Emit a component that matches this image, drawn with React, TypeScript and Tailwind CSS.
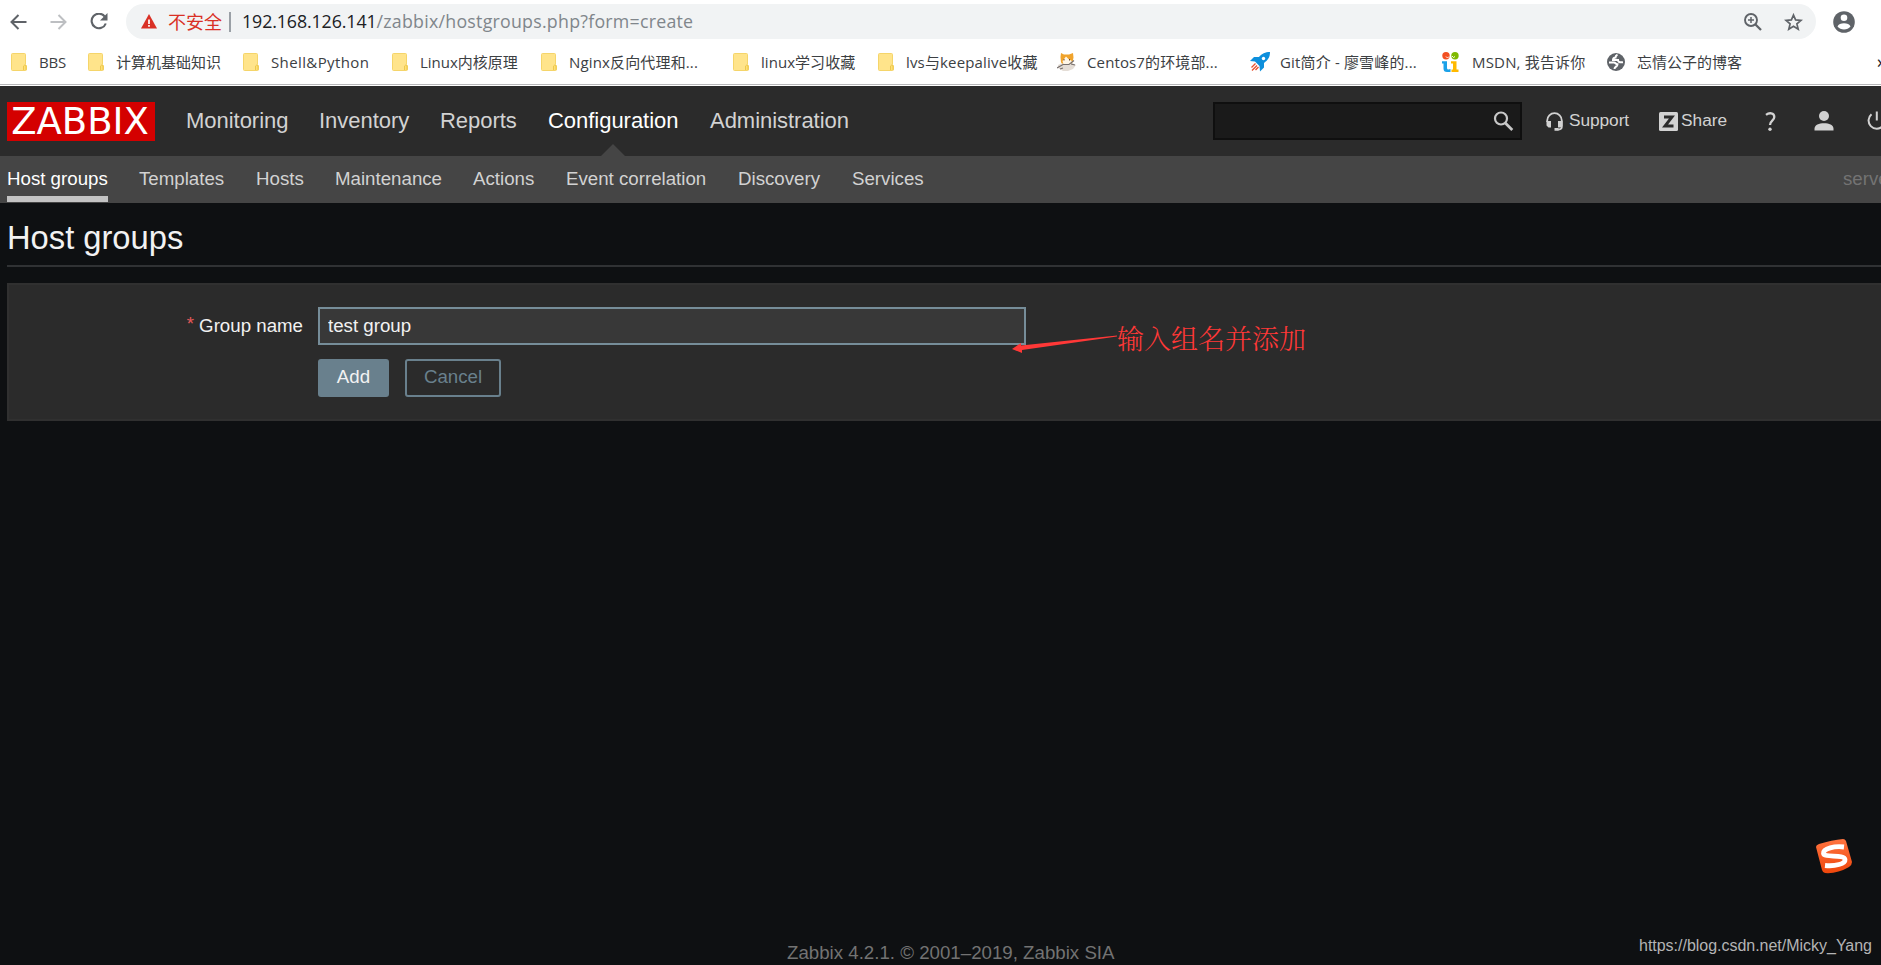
import type { ReactNode } from 'react'

interface Bookmark {
  label: string
  width: string
  spacing?: string
  icon?: ReactNode
}

interface MenuItem {
  label: string
  width: string
  active?: boolean
}

function FolderIcon() {
  return (
    <svg width="16" height="18" viewBox="0 0 16 18">
      <path d="M1.5.5h12q1 0 1 1v10l1 1v4q0 1-1 1h-13q-1 0-1-1v-15q0-1 1-1z" fill="#ffe48b" stroke="#f5d56a" />
      <path d="M12.5 17v-4q1.300-2 2.500 0v4" fill="#ffdf75" stroke="#edc84d" />
    </svg>
  )
}

function CatIcon() {
  return (
    <svg width="20" height="18" viewBox="0 0 20 18">
      <path d="M1 12l4-2 10 0 4 2-3 4-5 2H6l-5-3z" fill="#e4ddd6" />
      <path d="M4 0l3 1.500h5L16 0l.500 4.500-1 5-3 2H7l-3-2L3.500 4z" fill="#f0a32c" />
      <path d="M9 3.500L5.500 8l1 3.500 6.500.500 2-4-3.500-2z" fill="#fff6e6" />
      <path d="M0 15l6-3.500h6l5-4M14 11l4 1M3 16l3-1" fill="none" stroke="#77706e" strokeWidth="1.200" />
      <path d="M7 6v1.500M12.500 6v1.500" stroke="#6b4a2c" />
    </svg>
  )
}

function RocketIcon() {
  return (
    <svg width="20" height="20" viewBox="0 0 20 20">
      <path d="M20 0c-5 0-8 1.500-11 5L4 5 0 9l5 .500 4.500 4.500L10 19.500l4-4V11c4-3 6-6 6-11z" fill="#0d8fdc" />
      <circle cx="13.500" cy="6.500" r="1.700" fill="#fff" />
      <path d="M5.500 11.500L1.500 15.500M7 13.500L2 18.500M8.500 15L5.500 18" stroke="#e8502f" strokeWidth="1.300" />
    </svg>
  )
}

function MsdnIcon() {
  return (
    <svg width="17" height="20" viewBox="0 0 17 20">
      <circle cx="4" cy="3.700" r="3.700" fill="#f25022" />
      <circle cx="13" cy="3.700" r="3.700" fill="#7fba00" />
      <path d="M0 9.300h5V16q0 1.500 1.500 1.500l2-.500V20H5q-3.500 0-3.500-3.500V11.500H0z" fill="#1ba1e8" />
      <path d="M9 9.300h5.500V17.500H16.500V20H9.500V17.500H11V11.500H9z" fill="#ffb900" />
      <path d="M4 4.500l1.500 1.500 1.500-1.500M10 4l1.500 1.500L13 4.500" fill="none" stroke="#fff" strokeWidth=".9" />
    </svg>
  )
}

function GlobeIcon() {
  return (
    <svg width="18" height="18" viewBox="0 0 18 18">
      <circle cx="9" cy="9" r="9" fill="#5f6368" />
      <path
        d="M10.500 1.800c-2 .700-2 1.500-2 2.700-2 0-2.500.800-2.500 2.500h5c0 2 1.500 2.700 5 2.200M2 9.500h5c1.500 0 1.500 1.700 3.500 1.700 0 2.500-3 2.300-3 4.800"
        fill="none"
        stroke="#fff"
        strokeWidth="2"
      />
    </svg>
  )
}

const bookmarks: Bookmark[] = [
  { label: 'BBS', width: 'w-[77px]', spacing: '-tracking-[0.2px]' },
  { label: '计算机基础知识', width: 'w-[155px]' },
  { label: 'Shell&Python', width: 'w-[149px]', spacing: 'tracking-[0.38px]' },
  { label: 'Linux内核原理', width: 'w-[149px]' },
  { label: 'Nginx反向代理和...', width: 'w-[192px]', spacing: 'tracking-[0.15px]' },
  { label: 'linux学习收藏', width: 'w-[145px]', spacing: 'tracking-[0.05px]' },
  { label: 'lvs与keepalive收藏', width: 'w-[179px]', spacing: 'tracking-[0.16px]' },
  { label: 'Centos7的环境部...', width: 'w-[193px]', spacing: 'tracking-[0.13px]', icon: <CatIcon /> },
  { label: 'Git简介 - 廖雪峰的...', width: 'w-[192px]', spacing: 'tracking-[0.16px]', icon: <RocketIcon /> },
  { label: 'MSDN, 我告诉你', width: 'w-[165px]', spacing: 'tracking-[0.18px]', icon: <MsdnIcon /> },
  { label: '忘情公子的博客', width: 'w-[270px]', icon: <GlobeIcon /> },
]

const mainMenu: MenuItem[] = [
  { label: 'Monitoring', width: 'w-[133px]' },
  { label: 'Inventory', width: 'w-[121px]' },
  { label: 'Reports', width: 'w-[108px]' },
  { label: 'Configuration', width: 'w-[162px]', active: true },
  { label: 'Administration', width: 'w-[140px]' },
]

const subMenu: MenuItem[] = [
  { label: 'Host groups', width: 'w-[132px]', active: true },
  { label: 'Templates', width: 'w-[117px]' },
  { label: 'Hosts', width: 'w-[79px]' },
  { label: 'Maintenance', width: 'w-[138px]' },
  { label: 'Actions', width: 'w-[93px]' },
  { label: 'Event correlation', width: 'w-[172px]' },
  { label: 'Discovery', width: 'w-[114px]' },
  { label: 'Services', width: 'w-[90px]' },
]

function AddressBar() {
  return (
    <div className="flex h-[43px] items-center">
      <div className="flex w-[126px] items-center pl-[10px]">
        <svg width="17" height="16" viewBox="0 0 17 16" fill="none" stroke="#5f6368" strokeWidth="2">
          <path d="M16.500 8H1.500M8.500 1l-7 7 7 7" />
        </svg>
        <svg className="ml-[23px]" width="17" height="16" viewBox="0 0 17 16" fill="none" stroke="#bdbfc2" strokeWidth="2">
          <path d="M0.500 8h15M8.500 1l7 7-7 7" />
        </svg>
        <svg className="ml-[23px]" width="18" height="17" viewBox="0 0 18 17">
          <path d="M14.800 3.600A7.300 7.300 0 1 0 15.800 10.500" fill="none" stroke="#5f6368" strokeWidth="2.100" />
          <path d="M17.500 0v7.500h-7.500z" fill="#5f6368" />
        </svg>
      </div>
      <div className="flex h-[35px] w-[1690px] items-center rounded-full bg-[#f1f3f4] pl-[15px]">
        <svg width="16" height="15" viewBox="0 0 16 15">
          <path d="M8 0l8 14.500H0z" fill="#d93025" />
          <path d="M8 5.500v4.500M8 11v1.800" stroke="#fff" strokeWidth="1.700" />
        </svg>
        <span className="ml-[11px] w-[54px] text-[18px] leading-none whitespace-nowrap text-[#d93025]">不安全</span>
        <span className="ml-[7px] h-5 w-0.5 bg-[#9aa0a6]" />
        <span className="ml-[11px] text-[17.800px] tracking-[-0.100px] whitespace-nowrap text-[#80868b]">
          <span className="text-[#202124]">192.168.126.141</span>
          <span className="tracking-[0.240px]">/zabbix/hostgroups.php?form=create</span>
        </span>
        <svg className="ml-auto" width="18" height="18" viewBox="0 0 18 18" fill="none" stroke="#5f6368">
          <circle cx="7" cy="7" r="6" strokeWidth="1.900" />
          <path d="M11 11l6 6" strokeWidth="2.300" />
          <path d="M4 7h6M7 4v6" strokeWidth="1.500" />
        </svg>
        <svg className="mr-[13px] ml-[22px]" width="19" height="18" viewBox="0 0 19 18">
          <path
            d="M9.500 2l2.100 4.900 5.400.500-4.100 3.500 1.300 5.300-4.700-2.900-4.700 2.900 1.300-5.300L2 7.400l5.400-.500z"
            fill="none"
            stroke="#5f6368"
            strokeWidth="1.700"
          />
        </svg>
      </div>
      <svg className="ml-[17px]" width="22" height="22" viewBox="0 0 22 22">
        <circle cx="11" cy="11" r="10.800" fill="#5f6368" />
        <circle cx="11" cy="6.700" r="3.300" fill="#fff" />
        <path d="M4.500 15.500C6 11.300 16 11.300 17.500 15.500 14.500 19.400 7.500 19.400 4.500 15.500z" fill="#fff" />
      </svg>
    </div>
  )
}

function BookmarksBar() {
  return (
    <div className="flex h-[41px] overflow-hidden pl-[11px] text-[15px] whitespace-nowrap text-[#3c4043]">
      {bookmarks.map((item) => (
        <div key={item.label} className={`flex h-[38px] shrink-0 items-center ${item.width}`}>
          <span className={`shrink-0 ${item.icon ? 'w-[30px]' : 'w-7'}`}>{item.icon ?? <FolderIcon />}</span>
          <span className={item.spacing}>{item.label}</span>
        </div>
      ))}
      <span className="pt-[5px] text-[18px] text-[#202124]">»</span>
    </div>
  )
}

function TopNav() {
  return (
    <header className="flex h-[70px] w-full bg-[#2b2b2b] pl-[7px]">
      <div className="mt-4 flex h-[39px] w-[148px] shrink-0 items-center justify-center bg-[#d40000] pr-0.5 text-[37px] leading-none text-white [font-family:'DejaVu_Sans',sans-serif]">
        ZABBIX
      </div>
      <nav className="ml-[31px] flex text-[22px] leading-[69px] tracking-[-0.030px] whitespace-nowrap text-[#d2d2d2]">
        {mainMenu.map((item) => (
          <a key={item.label} className={`shrink-0 ${item.width} ${item.active ? 'text-white' : ''}`}>
            <span className="relative inline-block h-[70px]">
              {item.label}
              {item.active && (
                <span className="absolute bottom-0 left-1/2 -ml-3 border-x-12 border-b-12 border-x-transparent border-b-[#454545]" />
              )}
            </span>
          </a>
        ))}
      </nav>
      <div className="mt-4 ml-auto flex h-[38px] shrink-0 items-center text-[17.300px] text-[#d2d2d2]">
        <div className="flex h-[38px] w-[309px] items-center justify-end border-2 border-[#0f0f0f] bg-[#1a1a1a] pr-1.5">
          <svg width="21" height="20" viewBox="0 0 21 20" fill="none" stroke="#c8c8c8">
            <circle cx="8" cy="7.500" r="6" strokeWidth="2.200" />
            <path d="M12.300 12l7 7" strokeWidth="2.700" />
          </svg>
        </div>
        <a className="ml-6 flex w-[113px] items-center">
          <svg width="17" height="19" viewBox="0 0 17 19">
            <path d="M1.200 10V8.500a7.300 7.300 0 0 1 14.600 0V15q0 2.500-4 2.500" fill="none" stroke="#d2d2d2" strokeWidth="1.800" />
            <path d="M.500 9H5v6.500H2.500L.500 13.500zM12 9h4.500v5l-2 1.500H12zM8.500 16h4v2.800h-4z" fill="#d2d2d2" />
          </svg>
          <span className="ml-1.5 tracking-[-0.060px]">Support</span>
        </a>
        <a className="flex w-[106px] items-center">
          <svg width="19" height="19" viewBox="0 0 19 19">
            <rect width="19" height="19" rx="1.500" fill="#d2d2d2" />
            <path d="M5 5h8L6 14h8.500" fill="none" stroke="#2b2b2b" strokeWidth="2.900" />
          </svg>
          <span className="ml-[3px]">Share</span>
        </a>
        <svg width="11" height="19" viewBox="0 0 11 19">
          <path d="M1 2.800C4 .500 9.300.500 9.300 5c0 3.700-4.300 3.700-4.300 8" fill="none" stroke="#d2d2d2" strokeWidth="2.300" />
          <circle cx="5" cy="17.200" r="1.700" fill="#d2d2d2" />
        </svg>
        <svg className="ml-[38px]" width="20" height="20" viewBox="0 0 20 20" fill="#d2d2d2">
          <circle cx="10" cy="5" r="5" />
          <path d="M.500 19.500v-1.700C.500 14 5 12.300 10 12.300s9.500 1.700 9.500 5.500v1.700z" />
        </svg>
        <svg className="ml-[33px]" width="14" height="20" viewBox="0 0 14 20" fill="none" stroke="#d2d2d2" strokeWidth="2">
          <path d="M4.500 3.200a8.200 8.200 0 1 0 10.500 0M9.800.500v9" />
        </svg>
      </div>
    </header>
  )
}

function SubNav() {
  return (
    <nav className="flex h-[47px] overflow-hidden bg-[#454545] pl-[7px] text-[18.700px] leading-[45px] whitespace-nowrap text-[#d2d2d2]">
      {subMenu.map((item) => (
        <a key={item.label} className={`shrink-0 ${item.width}`}>
          {item.active ? (
            <span className="inline-block h-[46px] border-b-6 border-[#c3c3c3] text-white">{item.label}</span>
          ) : (
            item.label
          )}
        </a>
      ))}
      <span className="ml-[901px] text-[#737373]">serve</span>
    </nav>
  )
}

function HostGroupForm() {
  return (
    <form className="ml-[7px] h-[138px] border-2 border-r-0 border-[#303030] bg-[#2b2b2b] pt-[22px] text-[18.700px] text-[#f2f2f2]">
      <div className="flex items-center">
        <label className="w-[294px] text-right">
          <span className="relative -top-0.5 mr-[5px] text-[#e45959]">*</span>
          Group name
        </label>
        <input
          type="text"
          defaultValue="test group"
          className="ml-[15px] h-[38px] w-[708px] border-2 border-[#768d99] bg-[#383838] px-2 pb-px outline-none"
        />
      </div>
      <div className="mt-[14px] ml-[309px] flex">
        <button type="button" className="h-[38px] w-[71px] rounded-[3px] bg-[#69808d] pb-0.5">
          Add
        </button>
        <button type="button" className="ml-4 h-[38px] w-24 rounded-[3px] border-2 border-[#69808d] pb-0.5 text-[#69808d]">
          Cancel
        </button>
      </div>
    </form>
  )
}

function Annotation() {
  return (
    <div className="absolute top-[319px] left-[1012px] flex text-[#ff3837]">
      <svg width="105" height="36" viewBox="0 0 105 36" fill="currentColor">
        <path d="M0 30l9-6v2.500L105 16.500v1L10 31v3z" />
      </svg>
      <span className="text-[27px] leading-[38px] font-light whitespace-nowrap [font-family:'Noto_Serif_CJK_SC','Noto_Sans_CJK_SC_Light','Noto_Sans_CJK_SC',serif]">
        输入组名并添加
      </span>
    </div>
  )
}

function SogouBadge() {
  return (
    <svg className="absolute top-[838px] left-[1815px]" width="38" height="37" viewBox="0 0 38 37">
      <defs>
        <linearGradient id="badge" x2="0" y2="1">
          <stop stopColor="#ff7440" />
          <stop offset="1" stopColor="#ee470c" />
        </linearGradient>
      </defs>
      <path d="M4 6Q17 2 28 1q2 0 3 2l6 21q0 3-3 5-12 7-24 6-2 0-3-3L1 9q0-2 3-3z" fill="url(#badge)" />
      <path
        d="M29 9C20 8 8 10 8.500 15.500c.500 4.500 21 .500 21.500 6 .500 4.500-10 7-20 6"
        fill="none"
        stroke="#fff"
        strokeWidth="4.800"
      />
    </svg>
  )
}

export default function App() {
  return (
    <div className="relative flex h-[965px] w-[1881px] flex-col overflow-hidden bg-[#0e1012] [font-family:'Liberation_Sans',Arial,sans-serif]">
      <div className="h-[86px] shrink-0 overflow-hidden bg-white [font-family:'Open_Sans','Noto_Sans_CJK_SC',sans-serif]">
        <AddressBar />
        <BookmarksBar />
        <div className="h-px bg-[#b7b7b9]" />
      </div>
      <TopNav />
      <SubNav />
      <h1 className="mb-4 ml-[7px] h-16 border-b-2 border-[#303234] text-[32.700px] leading-[70px] text-[#f2f2f2]">Host groups</h1>
      <HostGroupForm />
      <footer className="mt-auto pl-[787px] text-[18.700px] leading-6 text-[#737373]">
        Zabbix 4.2.1. © 2001–2019, Zabbix SIA
      </footer>
      <Annotation />
      <SogouBadge />
      <span className="absolute right-[9px] bottom-[11px] text-[16px] leading-none tracking-[-0.020px] text-[#b4b4b5]">
        https://blog.csdn.net/Micky_Yang
      </span>
    </div>
  )
}
